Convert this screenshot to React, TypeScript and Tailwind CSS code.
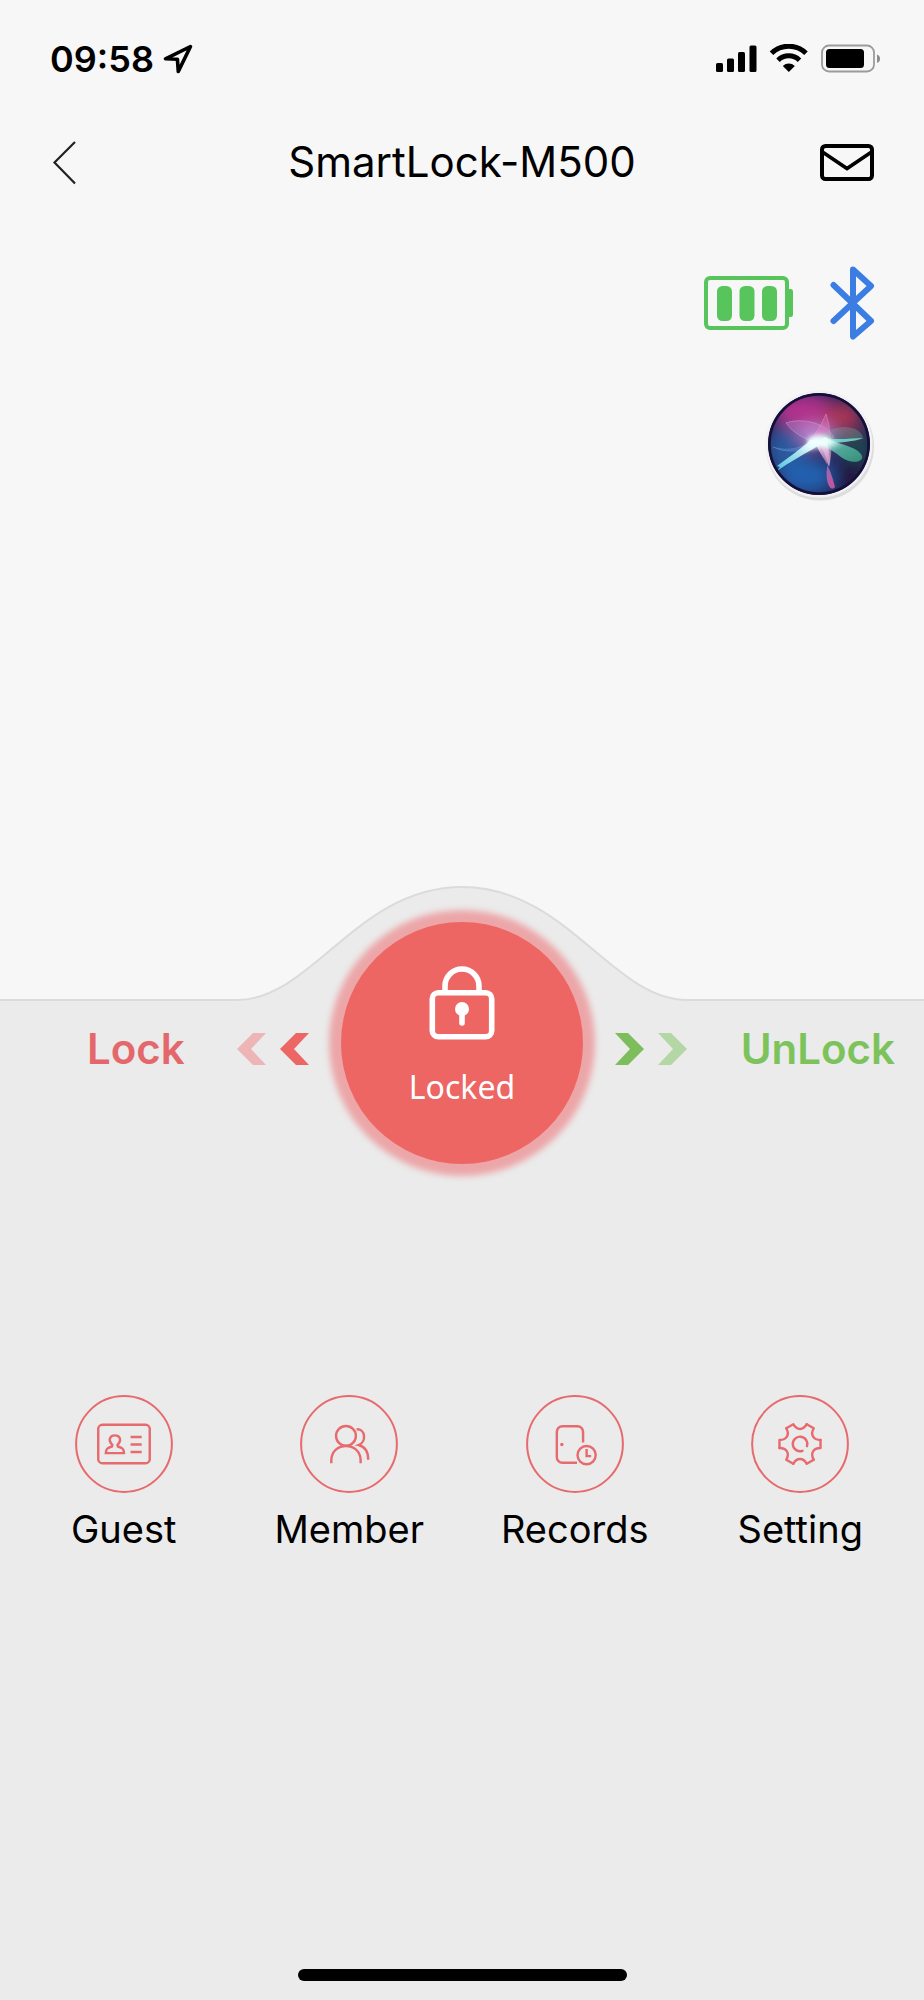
import React from 'react';

const GEAR_ANGLES = [0, 60, 120, 180, 240, 300];

function StatusBar() {
  return (
    <div className="flex items-center justify-between pl-[50px] pr-[43px] pt-[36px]">
      <div className="flex items-center gap-2">
        <span className="text-[36px] leading-[46px] font-semibold">09:58</span>
        <svg width="32" height="32" viewBox="0 0 32 32" fill="none" stroke="black" strokeWidth="3.600" strokeLinejoin="round" aria-hidden="true">
          <path d="M28.500 3.500 3.500 15.800 15.400 16.200 16.300 28.500Z" />
        </svg>
      </div>
      <svg width="165" height="30" viewBox="0 0 165 30" aria-hidden="true">
        <rect x="0" y="19" width="7" height="9" rx="1.500" />
        <rect x="11" y="14.500" width="7" height="13.500" rx="1.500" />
        <rect x="22" y="8" width="7" height="20" rx="1.500" />
        <rect x="33.500" y="1.500" width="7" height="26.500" rx="1.500" />
        <g fill="none" stroke="black" strokeWidth="5">
          <path d="M55.500 9.300a24.500 24.500 0 0 1 34.500 0" />
          <path d="M62 16.200a15.500 15.500 0 0 1 21.500 0" />
        </g>
        <path d="M66.800 21.900a9 9 0 0 1 12 0L72.800 28Z" />
        <rect x="106" y="1.500" width="52" height="26" rx="7" fill="none" stroke="#9b9b9b" strokeWidth="1.800" />
        <rect x="110" y="5" width="38" height="19" rx="3.500" />
        <path d="M161 10.500a4.500 4.500 0 0 1 0 8.500Z" fill="#8c8c8c" />
      </svg>
    </div>
  );
}

function Header() {
  return (
    <header className="grid grid-cols-[1fr_auto_1fr] items-center px-[50px] pt-[50px]">
      <button className="justify-self-start" aria-label="Back">
        <svg width="28" height="46" viewBox="0 0 28 46" fill="none" stroke="#222" strokeWidth="2.200">
          <path d="M25 3 4.500 23.500 25 44.500" />
        </svg>
      </button>
      <h1 className="text-[42px] leading-[60px] font-normal">SmartLock-M500</h1>
      <button className="justify-self-end" aria-label="Messages">
        <svg width="54" height="38" viewBox="0 0 54 38" fill="none" stroke="black" strokeWidth="4">
          <rect x="2" y="3" width="50" height="33" rx="3.500" />
          <path d="M2.500 9 27 25.500 51.500 9" strokeWidth="3.600" />
        </svg>
      </button>
    </header>
  );
}

function DeviceStatus() {
  return (
    <div className="flex items-center justify-end gap-9 pr-[48px] pt-[73px]">
      <svg width="90" height="54" viewBox="0 0 90 54" fill="#58c55c" role="img" aria-label="Lock battery full">
        <rect x="2" y="2" width="81" height="50" rx="4" fill="none" stroke="#58c55c" strokeWidth="4" />
        <rect x="13" y="10" width="15" height="35" rx="5.500" />
        <rect x="35.500" y="10" width="15" height="35" rx="5.500" />
        <rect x="58" y="10" width="15" height="35" rx="5.500" />
        <path d="M84 13h2.500a2.500 2.500 0 0 1 2.500 2.500v23a2.500 2.500 0 0 1-2.500 2.500H84Z" />
      </svg>
      <svg width="46" height="76" viewBox="0 0 46 76" fill="none" stroke="#3b7de3" strokeWidth="6" strokeLinecap="round" strokeLinejoin="round" role="img" aria-label="Bluetooth connected">
        <path d="M3.500 20 41 56 23 71.500V4.500L41 21 3.500 56" />
      </svg>
    </div>
  );
}

function SiriOrb() {
  return (
    <svg width="114" height="116" viewBox="-2 -2 114 116">
      <defs>
        <clipPath id="orb">
          <circle cx="55" cy="55" r="49" />
        </clipPath>
        <filter id="soft" x="-50%" y="-50%" width="200%" height="200%">
          <feGaussianBlur stdDeviation="8" />
        </filter>
        <filter id="glow" x="-50%" y="-50%" width="200%" height="200%">
          <feGaussianBlur stdDeviation="2.500" />
        </filter>
        <linearGradient id="tealLeft" x1="1" y1="0" x2="0" y2="1">
          <stop offset="0" stopColor="#fff" />
          <stop offset="1" stopColor="#5ed9ea" stopOpacity="0.850" />
        </linearGradient>
        <linearGradient id="tealRight" x1="0" y1="0" x2="1" y2="1">
          <stop offset="0" stopColor="#f2fffc" />
          <stop offset="0.500" stopColor="#5fd5b5" stopOpacity="0.700" />
          <stop offset="1" stopColor="#3fa284" stopOpacity="0.800" />
        </linearGradient>
        <linearGradient id="pinkDown" x1="0" y1="0" x2="0" y2="1">
          <stop offset="0" stopColor="#fff" />
          <stop offset="0.500" stopColor="#d57ac0" stopOpacity="0.750" />
          <stop offset="1" stopColor="#e2559f" />
        </linearGradient>
        <linearGradient id="pinkUp" x1="0" y1="1" x2="0" y2="0">
          <stop offset="0" stopColor="#fbe3f6" stopOpacity="0.700" />
          <stop offset="1" stopColor="#d95bb0" stopOpacity="0.400" />
        </linearGradient>
      </defs>
      <circle cx="56" cy="57.500" r="54" fill="#dddcde" />
      <circle cx="55" cy="55" r="53.500" fill="#f2f1f3" />
      <circle cx="55" cy="55" r="51" fill="#15123a" />
      <g clipPath="url(#orb)">
        <rect width="110" height="110" fill="#25265a" />
        <g filter="url(#soft)">
          <ellipse cx="40" cy="22" rx="32" ry="18" fill="#b0308c" />
          <ellipse cx="78" cy="28" rx="20" ry="15" fill="#a83654" />
          <ellipse cx="22" cy="60" rx="20" ry="22" fill="#2b589c" />
          <ellipse cx="42" cy="87" rx="28" ry="18" fill="#2460ae" />
          <ellipse cx="93" cy="59" rx="15" ry="16" fill="#1e4550" />
          <ellipse cx="88" cy="88" rx="15" ry="16" fill="#201541" />
          <ellipse cx="53" cy="47" rx="19" ry="11" fill="#b47fcb" />
        </g>
        <path d="M22 34C35 29 60 32 70 48L57 56C42 51 29 44 22 34Z" fill="#c89add" fillOpacity="0.280" stroke="#d0a8dd" strokeWidth="0.700" strokeOpacity="0.700" />
        <path d="M62 25C66 36 69 60 65 77L58 57 43 53C53 45 58 34 62 25Z" fill="url(#pinkUp)" stroke="#ec9dd2" strokeWidth="0.600" strokeOpacity="0.700" />
        <path d="M52 50C70 34 94 35 99 48 98 53 79 52 61 53Z" fill="#7db7ac" fillOpacity="0.300" />
        <path d="M9 58C24 63 39 59 54 49L49 58C36 63 20 64 9 58Z" fill="#629adf" fillOpacity="0.350" stroke="#75aee5" strokeWidth="0.500" strokeOpacity="0.600" />
        <path d="M57 48C72 52 85 49 100 49 88 53 74 54 62 54Z" fill="#70dfcd" fillOpacity="0.850" />
        <path d="M47 51C36 60 24 69 13 77L16 78 13 82C26 73 38 66 49 60L61 52Z" fill="url(#tealLeft)" />
        <path d="M61 48C74 56 94 57 98 67 100 74 85 75 77 68 72 64 65 59 54 55Z" fill="url(#tealRight)" />
        <path d="M51 52C54 65 65 71 71 98 66 104 61 92 63 79 63 73 68 63 62 52Z" fill="url(#pinkDown)" fillOpacity="0.850" />
        <g filter="url(#glow)" fill="#edffff">
          <ellipse cx="55" cy="52" rx="12" ry="6" />
          <path d="M36 62 56 46 75 55 55 58Z" />
        </g>
      </g>
      <circle cx="55" cy="55" r="49.500" fill="none" stroke="#151039" strokeWidth="2.500" />
    </svg>
  );
}

function Chevron({ className, flip }: { className: string; flip?: boolean }) {
  return (
    <svg width="29" height="32" viewBox="0 0 29 32" fill="currentColor" className={className} aria-hidden="true">
      <path d={flip ? 'M0 0h13L29 16 13 32H0L15 16Z' : 'M29 0H16L0 16 16 32H29L14 16Z'} />
    </svg>
  );
}

function LockControl() {
  return (
    <div className="relative -mt-[80px] grid grid-cols-[1fr_242px_1fr] items-center">
      <button className="flex items-center justify-between pl-[87px] pr-8 pt-3 text-[#e4686b]">
        <span className="text-[42px] leading-[52px] font-semibold">Lock</span>
        <span className="flex gap-[14px]">
          <Chevron className="text-[#edb5b6]" />
          <Chevron className="text-[#ec6666]" />
        </span>
      </button>
      <button className="flex h-[242px] flex-col items-center rounded-full bg-[#ed6664] pt-[43px] text-white shadow-[0_0_6px_12px_#eca6a8]">
        <svg width="66" height="76" viewBox="0 0 66 76" fill="none" stroke="white" strokeWidth="5.600" aria-hidden="true">
          <path d="M16 26V21a17 17 0 0 1 34 0v5" />
          <rect x="3.300" y="27.800" width="59.400" height="44" rx="6" />
          <circle cx="33" cy="44" r="7" fill="white" stroke="none" />
          <path d="M33 46v12" strokeLinecap="round" />
        </svg>
        <span className="mt-6 font-['Noto_Sans',sans-serif] text-[32px] leading-[44px]">Locked</span>
      </button>
      <button className="flex items-center justify-between pl-8 pr-[29px] pt-3 text-[#7dc35b]">
        <span className="flex gap-[14px]">
          <Chevron flip className="text-[#7dbd5b]" />
          <Chevron flip className="text-[#b5d6a5]" />
        </span>
        <span className="text-[42px] leading-[52px] font-semibold">UnLock</span>
      </button>
    </div>
  );
}

function GuestIcon() {
  return (
    <>
      <rect x="23" y="29.500" width="51" height="38" rx="4" />
      <path d="M30.500 57.500c0-4 1.500-5.300 6-6.500l.5-1.500c-5-5.500-2-9.500 2.500-9.500s7.500 4 2.500 9.500l.5 1.500c4.500 1.200 6 2.500 6 6.500Z" />
      <path d="M55 41.500h11M55 49h11M55 56.500h11" />
    </>
  );
}

function MemberIcon() {
  return (
    <>
      <circle cx="45.500" cy="40.500" r="9.800" />
      <path d="M31 67.500V64c1-18 28-18 29 0v3.500M56 34c9-.5 10 12.500 2 15.500 6 1.500 9.500 7 9.500 14.500" />
    </>
  );
}

function RecordsIcon() {
  return (
    <>
      <path d="M50.500 67H36a5.500 5.500 0 0 1-5.500-5.500v-25A5.500 5.500 0 0 1 36 31h15a5.500 5.500 0 0 1 5.500 5.500V47" />
      <circle cx="35.500" cy="49" r="1.700" fill="currentColor" stroke="none" />
      <circle cx="60" cy="59.500" r="9" />
      <path d="M60 53.500V60.500h4.500" />
    </>
  );
}

function SettingIcon() {
  return (
    <g transform="translate(48.500 48.500)" strokeLinejoin="round" strokeLinecap="round">
      {GEAR_ANGLES.map((angle) => (
        <path key={angle} d="M20.300-4V4C13 4 10 9.300 13.600 15.600" transform={`rotate(${angle})`} />
      ))}
      <path d="M2.500 6.700A7.200 7.200 0 1 1 6.900 2.200" />
    </g>
  );
}

const MENU = [
  { label: 'Guest', Icon: GuestIcon },
  { label: 'Member', Icon: MemberIcon },
  { label: 'Records', Icon: RecordsIcon },
  { label: 'Setting', Icon: SettingIcon },
];

export default function App() {
  return (
    <div className="flex min-h-screen flex-col bg-[#f7f7f7] font-[Inter,sans-serif] text-black">
      <StatusBar />
      <Header />
      <DeviceStatus />
      <div className="flex justify-end pr-[48px] pt-[46px]">
        <button aria-label="Siri shortcuts">
          <SiriOrb />
        </button>
      </div>

      {/* raised edge of the lower panel */}
      <div className="mt-[382px] flex items-end">
        <div className="h-[3px] flex-1 border-t-2 border-[#dbdbdb] bg-[#ebebeb]" />
        <svg width="450" height="117" viewBox="0 0 450 117" aria-hidden="true">
          <path d="M0 115C75 115 120 2 225 2S375 115 450 115V117H0Z" fill="#ebebeb" />
          <path d="M0 115C75 115 120 2 225 2S375 115 450 115" fill="none" stroke="#dbdbdb" strokeWidth="2" />
        </svg>
        <div className="h-[3px] flex-1 border-t-2 border-[#dbdbdb] bg-[#ebebeb]" />
      </div>

      <main className="flex flex-1 flex-col bg-[#ebebeb]">
        <LockControl />
        <nav className="mt-[231px] grid grid-cols-4 px-[11px]">
          {MENU.map(({ label, Icon }) => (
            <a key={label} href="#" className="flex flex-col items-center gap-3">
              <svg width="98" height="98" viewBox="0 0 97 97" fill="none" stroke="currentColor" strokeWidth="2.400" className="text-[#e76b6e]" aria-hidden="true">
                <circle cx="48.500" cy="48.500" r="47.400" strokeWidth="2" />
                <Icon />
              </svg>
              <span className="text-[38px] leading-[48px]">{label}</span>
            </a>
          ))}
        </nav>
        <div className="mx-auto mt-auto mb-[19px] h-3 w-[329px] rounded-full bg-black" />
      </main>
    </div>
  );
}
